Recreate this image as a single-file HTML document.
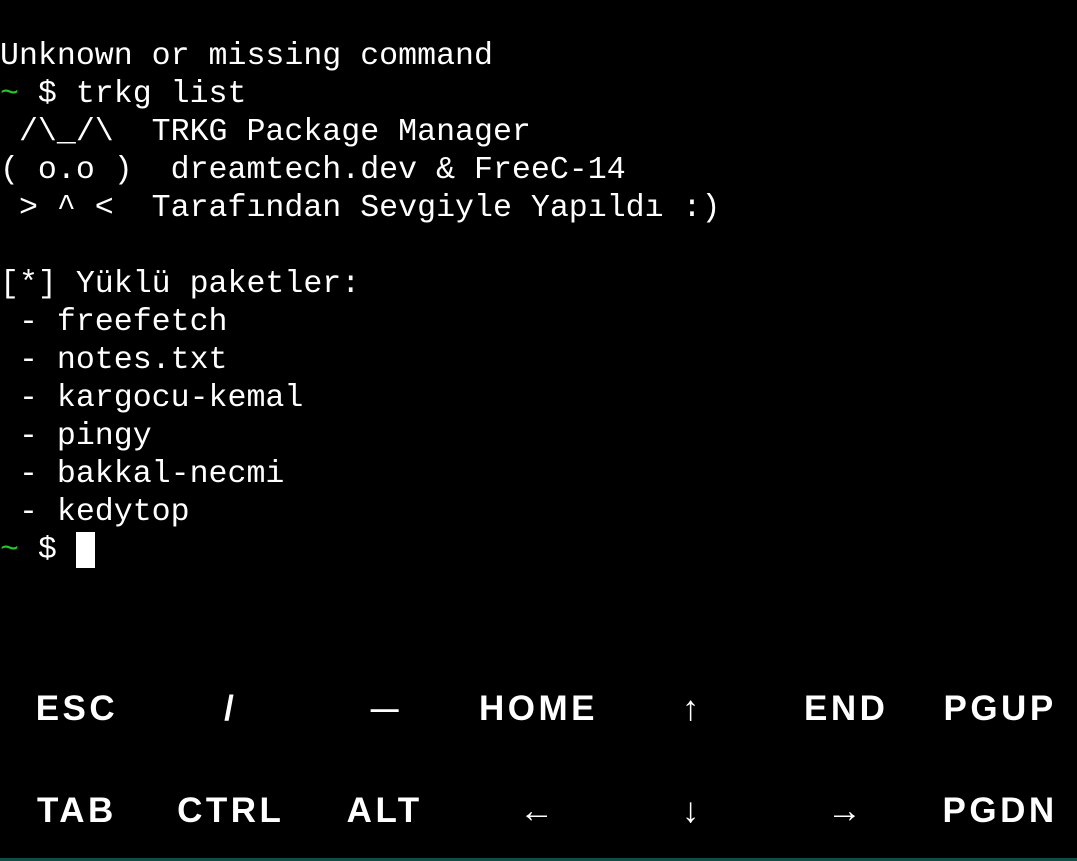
<!DOCTYPE html>
<html><head><meta charset="utf-8"><style>
html,body{margin:0;padding:0;background:#000;width:1077px;height:861px;overflow:hidden}
pre{position:absolute;left:0;top:38px;margin:0;font-family:"Liberation Mono","DejaVu Sans Mono",monospace;font-size:31.6px;line-height:38px;color:#fff;white-space:pre}
.g{color:#26c826}
.cur{display:inline-block;width:19px;height:36px;background:#fff;vertical-align:top;margin-top:0px}
.row{position:absolute;left:0;width:1077px;display:flex}
.row div{width:153.86px;text-align:center;color:#fff;font-family:"Liberation Sans",sans-serif;font-weight:bold;font-size:35px;letter-spacing:3.5px;line-height:40px}
.row div.d{font-size:28px;letter-spacing:0}
.line{position:absolute;left:0;top:858px;width:1077px;height:3px;background:#0d4f48}
</style></head><body>
<pre>Unknown or missing command
<span class="g">~</span> $ trkg list
 /\_/\  TRKG Package Manager
( o.o )  dreamtech.dev &amp; FreeC-14
 &gt; ^ &lt;  Tarafından Sevgiyle Yapıldı :)

[*] Yüklü paketler:
 - freefetch
 - notes.txt
 - kargocu-kemal
 - pingy
 - bakkal-necmi
 - kedytop
<span class="g">~</span> $ <span class="cur"></span></pre>
<div class="row" style="top:689px"><div>ESC</div><div>/</div><div class="d">—</div><div>HOME</div><div>↑</div><div>END</div><div>PGUP</div></div>
<div class="row" style="top:791px"><div>TAB</div><div>CTRL</div><div>ALT</div><div>←</div><div>↓</div><div>→</div><div>PGDN</div></div>
<div class="line"></div>
</body></html>
